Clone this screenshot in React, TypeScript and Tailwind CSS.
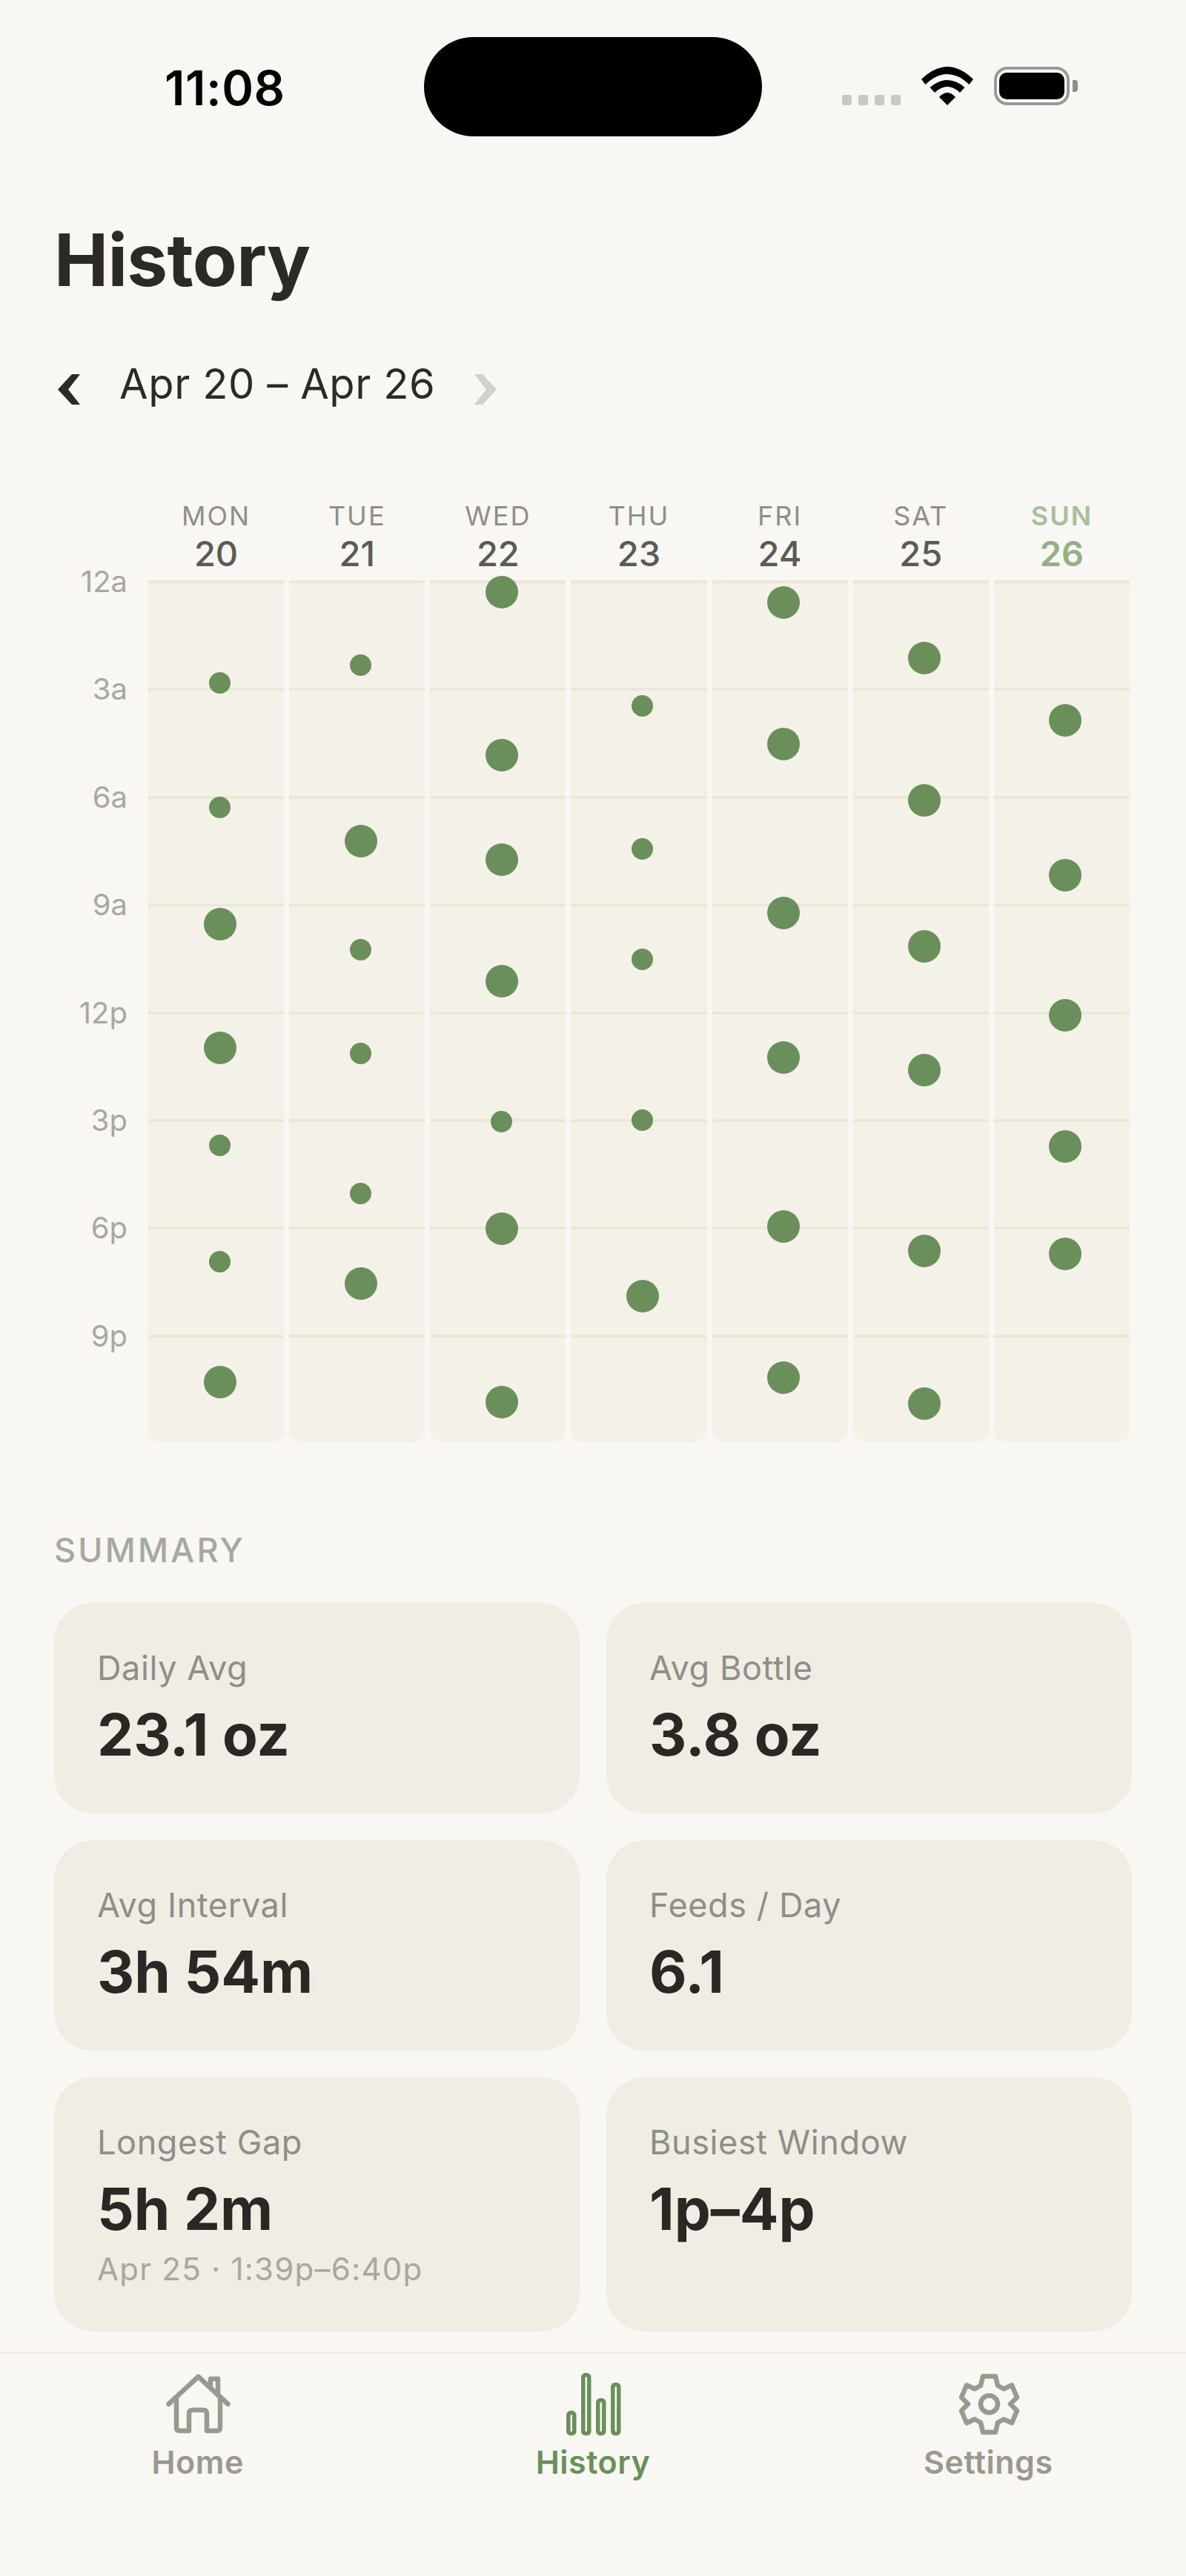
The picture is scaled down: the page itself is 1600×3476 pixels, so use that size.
const days: { d: string; n: number; today?: boolean; dots: [number, 0 | 1][] }[] = [
  { d: "MON", n: 20, dots: [[921.6, 0], [1089, 0], [1247, 1], [1414, 1], [1545, 0], [1702, 0], [1865, 1]] },
  { d: "TUE", n: 21, dots: [[897.5, 0], [1135, 1], [1281, 0], [1421, 0], [1610, 0], [1732, 1]] },
  { d: "WED", n: 22, dots: [[799, 1], [1019, 1], [1160, 1], [1323.5, 1], [1513, 0], [1658, 1], [1892, 1]] },
  { d: "THU", n: 23, dots: [[952, 0], [1145, 0], [1294, 0], [1511, 0], [1748.7, 1]] },
  { d: "FRI", n: 24, dots: [[812.7, 1], [1004, 1], [1232, 1], [1427, 1], [1655, 1], [1859, 1]] },
  { d: "SAT", n: 25, dots: [[888, 1], [1080, 1], [1277, 1], [1444, 1], [1688, 1], [1894, 1]] },
  { d: "SUN", n: 26, today: true, dots: [[971.6, 1], [1181, 1], [1370, 1], [1547, 1], [1691.5, 1]] },
];
const hours = ["12a", "3a", "6a", "9a", "12p", "3p", "6p", "9p"];
const stats = [
  { l: "Daily Avg", v: "23.1 oz" },
  { l: "Avg Bottle", v: "3.8 oz" },
  { l: "Avg Interval", v: "3h 54m" },
  { l: "Feeds / Day", v: "6.1" },
  { l: "Longest Gap", v: "5h 2m", s: "Apr 25 · 1:39p–6:40p" },
  { l: "Busiest Window", v: "1p–4p" },
];

function Chevron({ right, className }: { right?: boolean; className: string }) {
  return (
    <svg viewBox="0 0 30 41" className={"w-[30px] h-[41px] " + className}>
      <polygon
        fill="currentColor"
        points={right ? "11,0 0,0 16,20.5 0,41 11,41 30,20.5" : "19,0 30,0 14,20.5 30,41 19,41 0,20.5"}
      />
    </svg>
  );
}

function Wifi() {
  return (
    <svg viewBox="0 0 70 52" className="w-[70px] h-[52px]" fill="#000">
      <path d="M0 17Q35 -17 70 17L64.5 24Q35 -4 5.5 24Z" />
      <path d="M11.5 28Q35 8 58.5 28L52 35Q35 19 18 35Z" />
      <path d="M24 41Q35 29 46 41L35 52Z" />
    </svg>
  );
}

function HomeIcon() {
  return (
    <svg viewBox="2 0 130 100" className="w-[130px] h-[100px]" fill="none" stroke="currentColor" strokeWidth="6.5" strokeLinecap="round" strokeLinejoin="round">
      <path d="M27.5 54L67.5 17L107.5 54" />
      <path d="M38 46V86Q38 90 42 90H55V67Q55 62 60 62H74Q79 62 79 67V90H93Q97 90 97 86V46" />
      <path d="M84 32V20H94V42" />
    </svg>
  );
}

function BarsIcon() {
  return (
    <svg viewBox="-5 0 130 100" className="w-[130px] h-[100px]" fill="none" stroke="currentColor" strokeWidth="5.5">
      <rect x="26.75" y="65.75" width="8" height="28" rx="3" />
      <rect x="46.75" y="14.75" width="8" height="79" rx="3" />
      <rect x="66.75" y="48.75" width="8" height="45" rx="3" />
      <rect x="86.75" y="27.75" width="8" height="66" rx="3" />
    </svg>
  );
}

function GearIcon() {
  return (
    <svg viewBox="-3 0 130 100" className="w-[130px] h-[100px]" fill="none" stroke="currentColor" strokeWidth="6.5" strokeLinejoin="round">
      <path d="M55 16.5H72L75 29L83 33.5L94 28.5L101 45L92 54L101 63L94 79.5L83 74.5L75 79L72 92H55L52 79L44 74.5L33 79.5L26 63L35 54L26 45L33 28.5L44 33.5L52 29Z" />
      <circle cx="63.5" cy="54" r="11.5" />
    </svg>
  );
}

export default function App() {
  return (
    <div className="w-full min-h-[3476px] bg-[#f8f7f3] text-[#2c2a26] font-['Inter',sans-serif] overflow-hidden">
      {/* status bar */}
      <div className="flex items-start pt-[50px] h-[184px]">
        <div className="w-[572px] h-[134px] pl-[222px] flex items-center">
          <span className="text-[65px] leading-[70px] font-semibold text-black pt-[3px] tracking-[0.5px]">11:08</span>
        </div>
        <div className="w-[456px] h-[134px] rounded-full bg-black" />
        <div className="pl-[108px] pt-[40px] flex items-end gap-[28px] h-[92px]">
          <div className="flex gap-[9px]">
            <span className="w-[13px] h-[14px] rounded-[3px] bg-[#c8c8c4]" />
            <span className="w-[13px] h-[14px] rounded-[3px] bg-[#c8c8c4]" />
            <span className="w-[13px] h-[14px] rounded-[3px] bg-[#c8c8c4]" />
            <span className="w-[13px] h-[14px] rounded-[3px] bg-[#c8c8c4]" />
          </div>
          <Wifi />
          <div className="flex items-center gap-[4px]">
            <div className="w-[102px] h-[52px] rounded-[18px] border-[4px] border-[#9a9a94] bg-white px-[3px] py-[4px]">
              <div className="w-full h-full rounded-[10px] bg-black" />
            </div>
            <div className="w-[7px] h-[16px] rounded-r-[4px] bg-[#8e8e88]" />
          </div>
        </div>
      </div>

      {/* title */}
      <h1 className="mt-[108px] pl-[73px] text-[98px] leading-[118px] font-bold tracking-[-0.7px]">History</h1>

      {/* week nav */}
      <div className="mt-[73.5px] pl-[78px] flex items-start h-[68px]">
        <Chevron className="mt-[21.5px] text-[#2c2a26]" />
        <span className="ml-[53px] text-[56px] leading-[68px] font-normal tracking-[0.6px]">Apr 20 – Apr 26</span>
        <Chevron right className="ml-[53px] mt-[21.5px] text-[#d0d0cc]" />
      </div>

      {/* chart header */}
      <div className="mt-[126px] pl-[200px] pr-[76px] flex gap-[7px]">
        {days.map((c) => (
          <div key={c.d} className="flex-1 flex flex-col items-center">
            <span className={"text-[36px] leading-[36px] tracking-[2px] " + (c.today ? "font-semibold text-[#a9bf9b]" : "font-normal text-[#8f8e88]")}>{c.d}</span>
            <span className={"mt-[8px] text-[47px] leading-[50px] " + (c.today ? "font-semibold text-[#95b085]" : "font-medium text-[#5c5a56]")}>{c.n}</span>
          </div>
        ))}
      </div>

      {/* chart */}
      <div className="mt-[11.5px] pl-[73px] pr-[76px] flex">
        <div className="w-[99px] -mt-[18px] flex flex-col">
          {hours.map((h) => (
            <div key={h} className="h-[145.4px] text-right text-[40px] leading-[40px] text-[#a8a7a2]">{h}</div>
          ))}
        </div>
        <div className="ml-[28px] flex-1 flex gap-[7px]">
          {days.map((c) => (
            <div key={c.d} className="relative flex-1 flex flex-col rounded-b-[16px] bg-[#f3f1e8]">
              {hours.map((h) => (
                <div key={h} className="h-[145.4px] border-t-[4px] border-[#ece8d9]" />
              ))}
              {c.dots.map(([y, big]) => (
                <span
                  key={y}
                  className={"absolute left-[calc(50%+5px)] rounded-full bg-[#6b8f5a] " + (big ? "w-[44px] h-[44px] -ml-[22px] -mt-[22px]" : "w-[29px] h-[29px] -ml-[14.5px] -mt-[14.5px]")}
                  style={{ top: y - 783 }}
                />
              ))}
            </div>
          ))}
        </div>
      </div>

      {/* summary */}
      <div className="mt-[123px] pl-[73px] text-[45px] leading-[46px] font-medium tracking-[3.2px] text-[#a8a7a2]">SUMMARY</div>
      <div className="mt-[48px] px-[73px] grid grid-cols-2 gap-[36px]">
        {stats.map((s) => (
          <div key={s.l} className={"rounded-[52px] bg-[#f0ede5] pl-[58px] pt-[60.5px] " + (s.l === "Longest Gap" || s.l === "Busiest Window" ? "h-[343px]" : "h-[284px]")}>
            <div className="text-[45px] leading-[54px] tracking-[0.6px] text-[#8f8e88]">{s.l}</div>
            <div className="mt-[18.5px] text-[78px] leading-[90px] font-bold tracking-[0px] text-[#2a2825]">{s.v}</div>
            {s.s && <div className="mt-[11px] text-[42px] leading-[50px] tracking-[1.25px] text-[#a8a7a2]">{s.s}</div>}
          </div>
        ))}
      </div>

      {/* tabs */}
      <div className="mt-[28px] border-t-[2px] border-[#ece7e0] pt-[14px] flex">
        {[
          { t: "Home", I: HomeIcon, c: "text-[#9a998f]" },
          { t: "History", I: BarsIcon, c: "text-[#6b8f5a]" },
          { t: "Settings", I: GearIcon, c: "text-[#9a998f]" },
        ].map(({ t, I, c }) => (
          <div key={t} className={"flex-1 flex flex-col items-center " + c}>
            <I />
            <span className="mt-[6px] text-[43px] leading-[52px] font-semibold tracking-[0.5px]">{t}</span>
          </div>
        ))}
      </div>
    </div>
  );
}
